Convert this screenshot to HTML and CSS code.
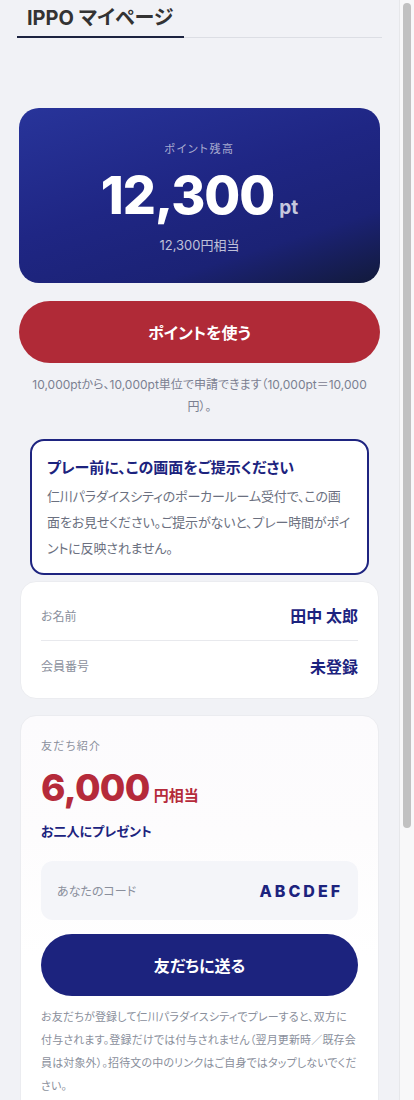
FILE: index.html
```html
<!DOCTYPE html>
<html lang="ja">
<head>
<meta charset="utf-8">
<title>IPPO マイページ</title>
<link rel="stylesheet" href="styles.css">
</head>
<body>
<div class="page">
  <header class="header">
    <div class="tab">IPPO マイページ</div>
  </header>

  <section class="balance">
    <div class="balance-label">ポイント残高</div>
    <div class="balance-value"><span class="num">12,300</span><span class="unit">pt</span></div>
    <div class="balance-yen">12,300円相当</div>
  </section>

  <button class="btn btn-red">ポイントを使う</button>
  <p class="note">10,000ptから、10,000pt単位で申請できます（10,000pt＝10,000円）。</p>

  <section class="notice">
    <h2 class="notice-title">プレー前に、この画面をご提示ください</h2>
    <p class="notice-body">仁川パラダイスシティのポーカールーム受付で、この画面をお見せください。ご提示がないと、プレー時間がポイントに反映されません。</p>
  </section>

  <section class="info card">
    <div class="row"><span class="label">お名前</span><span class="value">田中 太郎</span></div>
    <div class="row"><span class="label">会員番号</span><span class="value">未登録</span></div>
  </section>

  <section class="refer card">
    <div class="refer-label">友だち紹介</div>
    <div class="refer-amount"><span class="num">6,000</span><span class="unit">円相当</span></div>
    <div class="refer-sub">お二人にプレゼント</div>
    <div class="code-box"><span class="code-label">あなたのコード</span><span class="code">ABCDEF</span></div>
    <button class="btn btn-navy">友だちに送る</button>
    <p class="fine">お友だちが登録して仁川パラダイスシティでプレーすると、双方に付与されます。登録だけでは付与されません（翌月更新時／既存会員は対象外）。招待文の中のリンクはご自身ではタップしないでください。</p>
  </section>
</div>
<div class="scrollbar" aria-hidden="true"><div class="thumb"></div></div>
</body>
</html>
```

FILE: styles.css
```css
* { box-sizing: border-box; }
html, body { margin: 0; padding: 0; }
body {
  background: #f1f2f6;
  font-family: Inter, "Noto Sans CJK JP", sans-serif;
  font-feature-settings: "palt";
  color: #333;
}
.page {
  width: 399px;
  padding: 0 19px 360px;
}
.scrollbar {
  position: fixed;
  top: 0;
  right: 0;
  width: 15px;
  height: 100vh;
  background: #f8f8f9;
  border-left: 1px solid #e6e7ea;
  padding: 3px 3px 0 3px;
}
.thumb {
  height: 825px;
  border-radius: 4px;
  background: #c1c1c1;
}
.header {
  margin: 0 -2px;
  border-bottom: 1px solid #dcdee4;
  display: flex;
  padding-top: 5px;
}
.tab {
  font-size: 20px;
  font-weight: 700;
  color: #333;
  padding: 0 11px 5px 10px;
  border-bottom: 2px solid #1c2340;
  margin-bottom: -1px;
  line-height: 26px;
}
.balance {
  margin-top: 70px;
  height: 175px;
  border-radius: 20px;
  background: linear-gradient(162deg, #28349a 0%, #1f2684 45%, #1b2275 75%, #121a3b 100%);
  color: #fff;
  text-align: center;
  padding-top: 32px;
}
.balance-label {
  font-size: 11px;
  letter-spacing: 0.15em;
  color: rgba(255,255,255,0.62);
  line-height: 18px;
}
.balance-value {
  display: flex;
  justify-content: center;
  align-items: baseline;
  gap: 5px;
  margin-top: 8px;
  line-height: 60px;
}
.balance-value .num {
  font-size: 52px;
  font-weight: 800;
  letter-spacing: -1px;
}
.balance-value .unit {
  font-size: 19px;
  font-weight: 700;
  color: rgba(255,255,255,0.75);
}
.balance-yen {
  font-size: 13px;
  color: rgba(255,255,255,0.72);
  margin-top: -3px;
}
.btn {
  display: block;
  width: 100%;
  height: 62px;
  border: none;
  border-radius: 31px;
  color: #fff;
  font-family: Inter, "Noto Sans CJK JP", sans-serif;
  font-feature-settings: "palt";
  font-size: 16px;
  font-weight: 700;
}
.btn-red {
  margin-top: 18px;
  background: #b02a37;
}
.note {
  margin: 11px 0 0;
  padding: 0 12px;
  font-size: 12px;
  line-height: 22px;
  color: #7b8091;
  text-align: center;
}
.notice {
  margin: 21px 11px 0;
  border: 2px solid #1e2480;
  border-radius: 14px;
  background: #fff;
  padding: 16px 15px 12px;
}
.notice-title {
  margin: 0;
  font-size: 15px;
  font-weight: 700;
  color: #1c237e;
  line-height: 22px;
}
.notice-body {
  margin: 4px 0 0;
  font-size: 13px;
  line-height: 26px;
  letter-spacing: -0.15px;
  color: #6b7080;
}
.card {
  margin: 0 1px;
  background: #fff;
  border-radius: 16px;
  border: 1px solid #ebecf0;
}
.info {
  margin-top: 6px;
  padding: 8px 20px 8px;
}
.row {
  display: flex;
  justify-content: space-between;
  align-items: center;
  height: 50px;
}
.row + .row { border-top: 1px solid #e8e9ed; }
.label {
  font-size: 12px;
  color: #8a8f9c;
}
.value {
  font-size: 16px;
  font-weight: 700;
  color: #1c237e;
}
.refer {
  margin-top: 16px;
  padding: 21px 20px 20px;
  background: linear-gradient(180deg, #fcfbfd 0%, #fdfcfd 30%, #ffffff 60%);
}
.refer-label {
  font-size: 11px;
  letter-spacing: 0.12em;
  color: #8a8f9c;
  line-height: 18px;
}
.refer-amount {
  display: flex;
  align-items: baseline;
  gap: 4px;
  margin-top: 10px;
  line-height: 46px;
  color: #b52a3a;
}
.refer-amount .num {
  font-size: 37px;
  font-weight: 800;
  letter-spacing: -0.7px;
}
.refer-amount .unit {
  font-size: 15px;
  font-weight: 700;
}
.refer-sub {
  font-size: 13px;
  font-weight: 700;
  color: #1c237e;
  line-height: 20px;
  margin-top: 2px;
}
.code-box {
  margin-top: 20px;
  height: 59px;
  background: #f4f5f9;
  border-radius: 12px;
  display: flex;
  justify-content: space-between;
  align-items: center;
  padding: 0 15px 0 16px;
}
.code-label {
  font-size: 12px;
  color: #8a8f9c;
}
.code {
  font-size: 16px;
  font-weight: 800;
  letter-spacing: 3px;
  color: #1c237e;
}
.btn-navy {
  margin-top: 14px;
  background: #1c237e;
}
.fine {
  margin: 10px 0 0;
  font-size: 11px;
  line-height: 23px;
  letter-spacing: 0.15px;
  color: #8a8f9c;
}
```
